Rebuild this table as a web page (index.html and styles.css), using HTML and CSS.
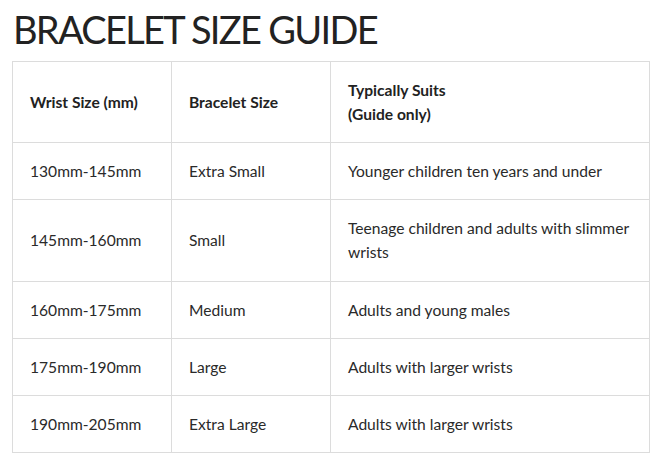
FILE: index.html
```html
<!DOCTYPE html>
<html>
<head>
<meta charset="utf-8">
<link rel="stylesheet" href="styles.css">
</head>
<body>
<div class="page">
  <h1 class="title">BRACELET SIZE GUIDE</h1>
  <table class="guide">
    <colgroup><col class="c1"><col class="c2"><col class="c3"></colgroup>
    <thead>
      <tr><th>Wrist Size (mm)</th><th>Bracelet Size</th><th>Typically Suits<br>(Guide only)</th></tr>
    </thead>
    <tbody>
      <tr><td>130mm-145mm</td><td>Extra Small</td><td>Younger children ten years and under</td></tr>
      <tr><td>145mm-160mm</td><td>Small</td><td>Teenage children and adults with slimmer wrists</td></tr>
      <tr><td>160mm-175mm</td><td>Medium</td><td>Adults and young males</td></tr>
      <tr><td>175mm-190mm</td><td>Large</td><td>Adults with larger wrists</td></tr>
      <tr><td>190mm-205mm</td><td>Extra Large</td><td>Adults with larger wrists</td></tr>
    </tbody>
  </table>
</div>
</body>
</html>
```
FILE: styles.css
```css
html, body { margin: 0; padding: 0; background: #fff; }
.page { padding: 0 15px 0 12px; color: #222; font-family: Lato, "Noto Sans", sans-serif; }
.title {
  margin: 0;
  padding: 9px 0 0 1px;
  height: 61px;
  box-sizing: border-box;
  font-weight: 400;
  font-size: 38px;
  letter-spacing: -1.7px;
  line-height: 40px;
  color: #222;
}
.guide {
  border-collapse: collapse;
  width: 638px;
  table-layout: fixed;
  font-size: 15.6px;
  line-height: 24px;
}
.c1, .c2 { width: 159px; }
.guide th, .guide td {
  border: 1px solid #dcdcdc;
  padding: 16px 10px 16px 17px;
  text-align: left;
  vertical-align: middle;
}
.guide th { font-weight: 700; }
.guide td { color: #2a2a2a; }
.guide tbody tr:nth-child(2) td { padding-bottom: 17px; }
```
